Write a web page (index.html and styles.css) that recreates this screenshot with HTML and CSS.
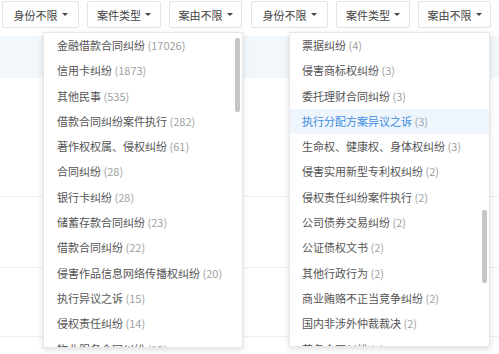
FILE: index.html
```html
<!DOCTYPE html>
<html lang="zh-CN">
<head>
    <meta charset="UTF-8">
    <meta name="viewport" content="width=device-width, initial-scale=1.0">
    <title>案由筛选</title>
    <link rel="stylesheet" href="styles.css">
</head>
<body>
    <div class="screen">
        <section class="panel">
            <div class="filters">
                <button class="filter filter-wide">身份不限<span class="caret"></span></button>
                <button class="filter">案件类型<span class="caret"></span></button>
                <button class="filter filter-narrow">案由不限<span class="caret"></span></button>
            </div>
            <div class="rows">
                <div class="row row-hover"></div>
                <div class="row row-tall"></div>
                <div class="row row-mid"></div>
                <div class="row row-low"></div>
            </div>
            <div class="dropdown dropdown-left">
                <ul class="options">
                    <li>金融借款合同纠纷 <span class="count">(17026)</span></li>
                    <li>信用卡纠纷 <span class="count">(1873)</span></li>
                    <li>其他民事 <span class="count">(535)</span></li>
                    <li>借款合同纠纷案件执行 <span class="count">(282)</span></li>
                    <li>著作权权属、侵权纠纷 <span class="count">(61)</span></li>
                    <li>合同纠纷 <span class="count">(28)</span></li>
                    <li>银行卡纠纷 <span class="count">(28)</span></li>
                    <li>储蓄存款合同纠纷 <span class="count">(23)</span></li>
                    <li>借款合同纠纷 <span class="count">(22)</span></li>
                    <li>侵害作品信息网络传播权纠纷 <span class="count">(20)</span></li>
                    <li>执行异议之诉 <span class="count">(15)</span></li>
                    <li>侵权责任纠纷 <span class="count">(14)</span></li>
                    <li>物业服务合同纠纷 <span class="count">(13)</span></li>
                </ul>
                <div class="scroll-thumb thumb-top"></div>
            </div>
        </section>

        <section class="panel panel-right">
            <div class="filters">
                <button class="filter filter-wide">身份不限<span class="caret"></span></button>
                <button class="filter">案件类型<span class="caret"></span></button>
                <button class="filter filter-narrow">案由不限<span class="caret"></span></button>
            </div>
            <div class="rows">
                <div class="row row-hover"></div>
                <div class="row row-tall"></div>
                <div class="row row-mid"></div>
                <div class="row row-low"></div>
            </div>
            <div class="dropdown dropdown-right">
                <ul class="options">
                    <li>票据纠纷 <span class="count">(4)</span></li>
                    <li>侵害商标权纠纷 <span class="count">(3)</span></li>
                    <li>委托理财合同纠纷 <span class="count">(3)</span></li>
                    <li class="active">执行分配方案异议之诉 <span class="count">(3)</span></li>
                    <li>生命权、健康权、身体权纠纷 <span class="count">(3)</span></li>
                    <li>侵害实用新型专利权纠纷 <span class="count">(2)</span></li>
                    <li>侵权责任纠纷案件执行 <span class="count">(2)</span></li>
                    <li>公司债券交易纠纷 <span class="count">(2)</span></li>
                    <li>公证债权文书 <span class="count">(2)</span></li>
                    <li>其他行政行为 <span class="count">(2)</span></li>
                    <li>商业贿赂不正当竞争纠纷 <span class="count">(2)</span></li>
                    <li>国内非涉外仲裁裁决 <span class="count">(2)</span></li>
                    <li>劳务合同纠纷 <span class="count">(1)</span></li>
                </ul>
                <div class="scroll-thumb thumb-low"></div>
            </div>
        </section>
    </div>
</body>
</html>
```

FILE: styles.css
```css
html, body {
    margin: 0;
    padding: 0;
    background-color: #fff;
}
body {
    font-family: "Noto Sans CJK SC", "Noto Sans", sans-serif;
    font-size: 11px;
    color: #555;
}
.screen {
    display: flex;
    width: 499px;
    height: 354px;
    overflow: hidden;
}
.panel {
    position: relative;
    width: 249px;
    flex-shrink: 0;
}
.panel-right {
    width: 250px;
}

/* filter buttons */
.filters {
    display: flex;
    gap: 8px;
    padding: 1px 0 0 2px;
    height: 27px;
}
.filter {
    display: flex;
    align-items: center;
    justify-content: center;
    gap: 4px;
    width: 74px;
    height: 27px;
    padding: 0;
    font-family: inherit;
    font-size: 11px;
    color: #444;
    background-color: #fff;
    border: 1px solid #e3e3e3;
    border-radius: 2px;
    box-sizing: border-box;
}
.filter-wide {
    width: 77px;
}
.filter-narrow {
    width: 73px;
}
.caret {
    width: 0;
    height: 0;
    border-left: 3px solid transparent;
    border-right: 3px solid transparent;
    border-top: 3px solid #444;
}

/* table rows behind the menu */
.rows {
    padding-top: 8px;
}
.row {
    border-bottom: 1px solid #efefef;
}
.row-hover {
    height: 42px;
    background-color: #f2f7fc;
    border-bottom: none;
}
.row-tall {
    height: 118px;
}
.row-mid {
    height: 70px;
}
.row-low {
    height: 68px;
}

/* dropdown menu */
.dropdown {
    position: absolute;
    top: 32px;
    width: 200px;
    height: 316px;
    background-color: #fff;
    border: 1px solid #e6e6e6;
    box-shadow: 0 2px 6px rgba(0, 0, 0, 0.13);
    box-sizing: border-box;
    overflow: hidden;
}
.dropdown-left {
    left: 43px;
}
.dropdown-right {
    left: 40px;
    width: 201px;
    height: 315px;
}
.options {
    list-style: none;
    margin: 0;
    padding: 0;
}
.options li {
    height: 25.3px;
    line-height: 25.3px;
    padding-left: 13px;
    white-space: nowrap;
    color: #555;
}
.dropdown-right .options li {
    padding-left: 12px;
}
.options li.active {
    background-color: #eef5fc;
    color: #3d8de0;
}
.count {
    color: #a0a0a0;
}
.options li.active .count {
    color: #9aa6b2;
}
.scroll-thumb {
    position: absolute;
    right: 2px;
    width: 5px;
    background-color: #c6c6c6;
    border-radius: 2px;
}
.thumb-top {
    top: 5px;
    height: 74px;
}
.thumb-low {
    top: 177px;
    height: 73px;
}
```
